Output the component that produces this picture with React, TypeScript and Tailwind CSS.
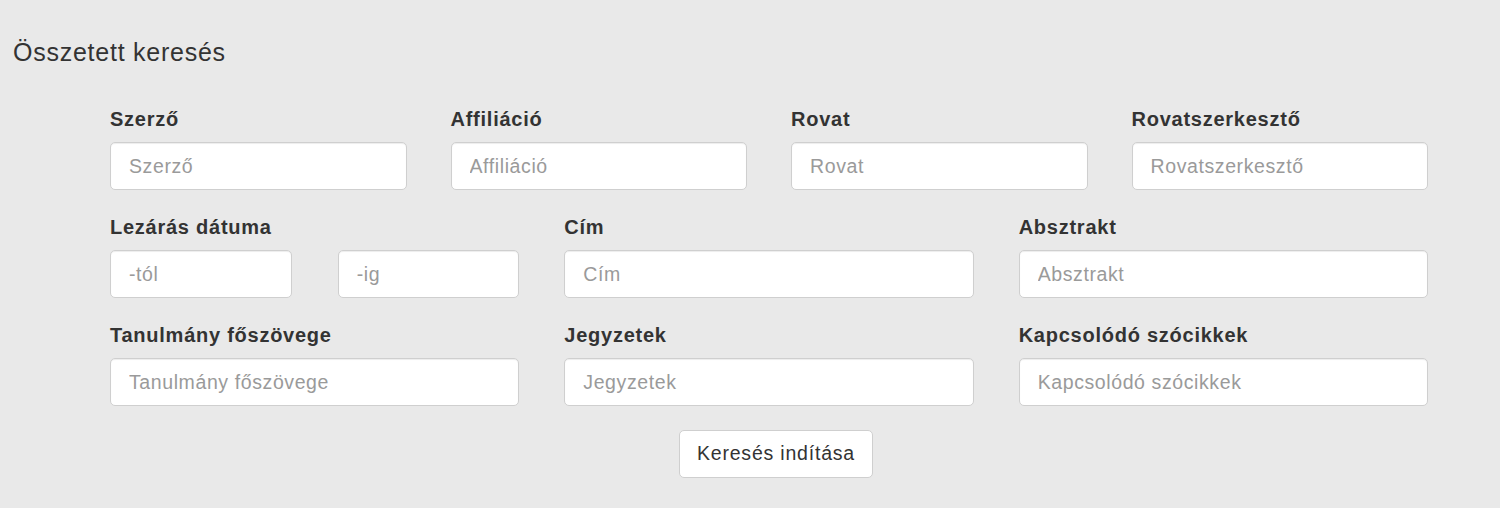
const font = { fontFamily: '"Liberation Sans", Arial, sans-serif' }

function Field({ label, placeholder }: { label: string; placeholder: string }) {
  return (
    <div className="flex flex-col">
      <label className="text-[20px] font-bold leading-[26px] tracking-[0.75px] text-[#333] mb-[10px]">{label}</label>
      <Input placeholder={placeholder} />
    </div>
  )
}

function Input({ placeholder }: { placeholder: string }) {
  return (
    <input
      type="text"
      placeholder={placeholder}
      className="h-[48px] w-full rounded-[5px] border border-[#cfcfcf] bg-white px-[18px] text-[19.5px] tracking-[0.6px] text-[#555] placeholder:text-[#9a9a9a] shadow-[inset_0_1px_1px_rgba(0,0,0,0.075)] outline-none"
    />
  )
}

export default function App() {
  return (
    <div className="min-h-[508px] w-full bg-[#e9e9e9]" style={font}>
      <h2 className="pl-[13px] pt-[37px] text-[25px] leading-[30px] tracking-[0.75px] text-[#333]">Összetett keresés</h2>

      <div className="ml-[110px] w-[1318px] pt-[39px] flex flex-col gap-[24px]">
        {/* első sor */}
        <div className="grid grid-cols-4 gap-x-[44px]">
          <Field label="Szerző" placeholder="Szerző" />
          <Field label="Affiliáció" placeholder="Affiliáció" />
          <Field label="Rovat" placeholder="Rovat" />
          <Field label="Rovatszerkesztő" placeholder="Rovatszerkesztő" />
        </div>

        {/* második sor */}
        <div className="grid grid-cols-3 gap-x-[45px]">
          <div className="flex flex-col">
            <label className="text-[20px] font-bold leading-[26px] tracking-[0.75px] text-[#333] mb-[10px]">Lezárás dátuma</label>
            <div className="grid grid-cols-2 gap-x-[46px]">
              <Input placeholder="-tól" />
              <Input placeholder="-ig" />
            </div>
          </div>
          <Field label="Cím" placeholder="Cím" />
          <Field label="Absztrakt" placeholder="Absztrakt" />
        </div>

        {/* harmadik sor */}
        <div className="grid grid-cols-3 gap-x-[45px]">
          <Field label="Tanulmány főszövege" placeholder="Tanulmány főszövege" />
          <Field label="Jegyzetek" placeholder="Jegyzetek" />
          <Field label="Kapcsolódó szócikkek" placeholder="Kapcsolódó szócikkek" />
        </div>

        <div className="flex justify-center pl-[14px]">
          <button className="h-[48px] w-[194px] rounded-[5px] border border-[#cfcfcf] bg-white text-[19.5px] tracking-[0.8px] text-[#333]">
            Keresés indítása
          </button>
        </div>
      </div>
    </div>
  )
}
